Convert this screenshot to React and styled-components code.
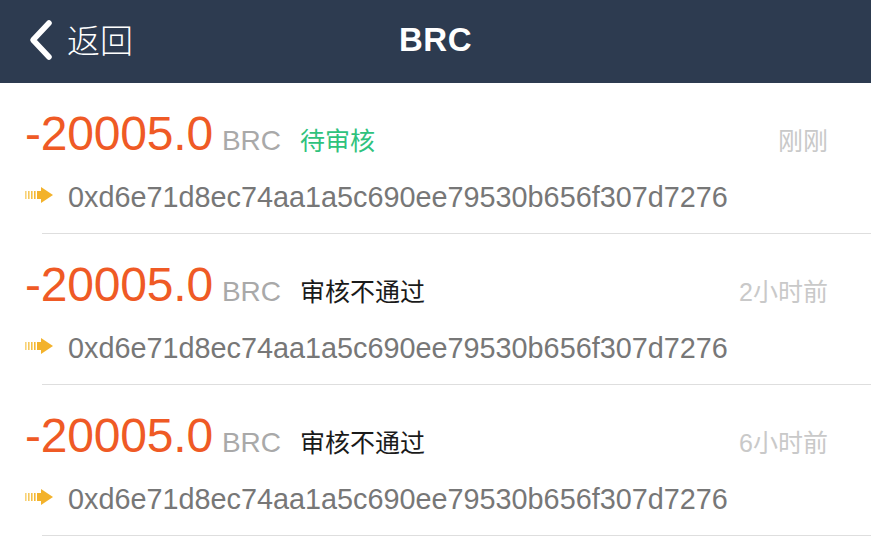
import React from "react";
import styled, { createGlobalStyle } from "styled-components";

const GlobalStyle = createGlobalStyle`
  html, body {
    margin: 0;
    padding: 0;
    background: #ffffff;
  }
  body {
    font-family: "Liberation Sans", "Noto Sans CJK SC", sans-serif;
  }
`;

const Page = styled.div`
  width: 871px;
  min-height: 543px;
  background: #fff;
  overflow: hidden;
`;

const NavBar = styled.header`
  height: 83px;
  background: #2d3b50;
  display: grid;
  grid-template-columns: 1fr auto 1fr;
  align-items: center;
  color: #fff;
`;

const BackButton = styled.div`
  display: flex;
  align-items: center;
  gap: 12px;
  padding-left: 27px;
  font-family: "Noto Sans CJK SC", sans-serif;
  font-weight: 300;
  font-size: 33px;
  line-height: 1;
  margin-top: -4px;
`;

const NavTitle = styled.h1`
  margin: -4px 0 0;
  font-size: 33px;
  font-weight: 700;
  letter-spacing: 0.5px;
`;

const List = styled.ul`
  list-style: none;
  margin: 0;
  padding: 0;
`;

const Item = styled.li`
  position: relative;
  padding: 26px 43px 21px 25px;

  &::after {
    content: "";
    position: absolute;
    left: 42px;
    right: 0;
    bottom: 0;
    height: 1px;
    background: #dedede;
  }
`;

const TopLine = styled.div`
  display: flex;
  align-items: baseline;
  height: 50px;
  line-height: 50px;
`;

const Amount = styled.span`
  font-size: 48px;
  color: #ef5a25;
  letter-spacing: -0.2px;
`;

const Unit = styled.span`
  font-size: 28px;
  color: #a9a9a9;
  margin-left: 9px;
`;

const Status = styled.span`
  font-family: "Noto Sans CJK SC", sans-serif;
  font-size: 25px;
  margin-left: 19px;
  color: ${(p) => (p.pending ? "#2fc27d" : "#1a1a1a")};
`;

const Time = styled.span`
  margin-left: auto;
  font-family: "Liberation Sans", "Noto Sans CJK SC", sans-serif;
  font-size: 25px;
  color: #c9c9c9;
`;

const AddressLine = styled.div`
  display: flex;
  align-items: center;
  gap: 15px;
  margin-top: 18px;
  height: 36px;
`;

const Address = styled.span`
  font-size: 28.8px;
  color: #777;
  line-height: 36px;
  margin-top: 4px;
`;

const ChevronLeft = () => (
  <svg width="28" height="42" viewBox="0 0 28 42">
    <path
      d="M22 4 L6 21 L22 38"
      fill="none"
      stroke="#fff"
      strokeWidth="5.5"
      strokeLinecap="round"
      strokeLinejoin="round"
    />
  </svg>
);

const ArrowIcon = () => (
  <svg width="28" height="16" viewBox="0 0 28 16">
    <rect x="0" y="4" width="1.6" height="8" fill="#f7d27a" />
    <rect x="3" y="4" width="1.6" height="8" fill="#f6c85c" />
    <rect x="6" y="4" width="1.6" height="8" fill="#f5c046" />
    <rect x="9" y="4" width="1.6" height="8" fill="#f4b935" />
    <rect x="12" y="4" width="5" height="8" fill="#f3b22b" />
    <path d="M16 0 L28 8 L16 16 Z" fill="#f3b22b" />
  </svg>
);

const records = [
  { status: "待审核", pending: true, time: "刚刚" },
  { status: "审核不通过", pending: false, time: "2小时前" },
  { status: "审核不通过", pending: false, time: "6小时前" },
];

export default function App() {
  return (
    <Page>
      <GlobalStyle />
      <NavBar>
        <BackButton>
          <ChevronLeft />
          返回
        </BackButton>
        <NavTitle>BRC</NavTitle>
        <div />
      </NavBar>
      <List>
        {records.map((r, i) => (
          <Item key={i}>
            <TopLine>
              <Amount>-20005.0</Amount>
              <Unit>BRC</Unit>
              <Status pending={r.pending}>{r.status}</Status>
              <Time>{r.time}</Time>
            </TopLine>
            <AddressLine>
              <ArrowIcon />
              <Address>0xd6e71d8ec74aa1a5c690ee79530b656f307d7276</Address>
            </AddressLine>
          </Item>
        ))}
      </List>
    </Page>
  );
}
